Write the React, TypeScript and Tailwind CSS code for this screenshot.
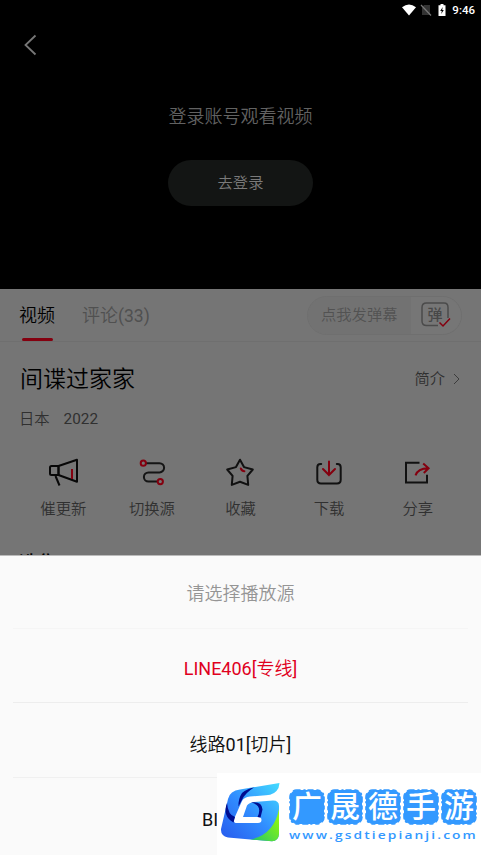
import type { ReactNode } from "react";

const actions: { label: string; icon: ReactNode }[] = [
  {
    label: "催更新",
    icon: (
      <svg width="32" height="30" viewBox="0 0 32 30" fill="none" stroke="#080808" strokeWidth="2" strokeLinejoin="round">
        <path d="M4.500 9h7v9h-7q-1.500 0-1.500-1.500v-6Q3 9 4.500 9z" />
        <path d="M11.500 9 30 2.700v22L11.500 18z" />
        <path d="M8.500 19l4 9.500" />
        <path d="M25 12v10" stroke="#84000f" />
      </svg>
    ),
  },
  {
    label: "切换源",
    icon: (
      <svg width="32" height="30" viewBox="0 0 32 30" fill="none" strokeWidth="2">
        <path d="M10 6.200h13.500a4.600 4.600 0 0 1 0 9.200h-11a4.600 4.600 0 0 0 0 9.200H24" stroke="#151515" />
        <circle cx="7.300" cy="6.200" r="2.600" fill="#757575" stroke="#84000f" />
        <circle cx="24.300" cy="24.600" r="2.600" fill="#757575" stroke="#84000f" />
      </svg>
    ),
  },
  {
    label: "收藏",
    icon: (
      <svg width="32" height="30" viewBox="0 0 32 30" fill="none" strokeWidth="2" strokeLinejoin="round" strokeLinecap="round">
        <path d="M16 2.700 20 10.100 28.800 12.500 23.400 18.900 24.200 27.900 16 24.700 7.800 27.900 8.600 18.900 3.200 12.500 12 10.100z" stroke="#111" />
        <path d="M16.800 11.500q1.200 2.600 3.600 2.700" stroke="#84000f" />
      </svg>
    ),
  },
  {
    label: "下载",
    icon: (
      <svg width="32" height="30" viewBox="0 0 32 30" fill="none" strokeWidth="2" strokeLinecap="round">
        <path d="M8.200 7H7.600Q4.300 7 4.300 10.300v12.400q0 3.700 3.700 3.700h16q3.700 0 3.700-3.700V10.300q0-3.300-3.300-3.300h-.6" stroke="#111" />
        <path d="M16 4.500V18M10 12l6 6 6-6" stroke="#84000f" />
      </svg>
    ),
  },
  {
    label: "分享",
    icon: (
      <svg width="32" height="30" viewBox="0 0 32 30" fill="none" strokeWidth="2">
        <path d="M17.500 5.800H4v19.600h21v-7.700" stroke="#111" />
        <path d="M13.500 18.300q2.500-6.800 12.500-7M21.200 6.400l5.400 4.800-4.800 4.800" stroke="#84000f" />
      </svg>
    ),
  },
];

const logoChars = ["广", "晟", "德", "手", "游"];

function StatusBar() {
  return (
    <div className="flex h-5 items-center justify-end pr-[6px] text-white">
      <svg width="14" height="12" viewBox="0 0 14 12" fill="#fff">
        <path d="M7 11.500 0 3.200Q7-2.400 14 3.200z" />
      </svg>
      <svg className="ml-[4px]" width="12" height="12" viewBox="0 0 12 12">
        <path d="M4 1h6v10H2V4z" fill="#333" />
        <path d="M1 1l10 10.500" stroke="#777" strokeWidth="1.200" />
      </svg>
      <svg className="ml-[6px]" width="8" height="12" viewBox="0 0 8 12">
        <path d="M2.500 0h3v1.200H7.500V12H.5V1.200h2z" fill="#fff" />
        <path d="M4.700 3 2.200 7h1.600l-.6 3 2.600-4H4.200z" fill="#000" />
      </svg>
      <span className="ml-[6px] text-[11.5px] leading-5 font-medium">9:46</span>
    </div>
  );
}

function Player() {
  return (
    <section className="h-[289px] bg-black">
      <StatusBar />
      <div className="flex h-[50px] items-center pl-6">
        <svg width="13" height="22" viewBox="0 0 13 22" fill="none" stroke="#777" strokeWidth="1.800">
          <path d="M11.500 1.500 1.500 11l10 9.500" />
        </svg>
      </div>
      <div className="flex flex-col items-center pt-[34px]">
        <p className="text-lg leading-[26px] text-[#626262]">登录账号观看视频</p>
        <button className="mt-[30px] h-[46px] w-[145px] rounded-full bg-[#131514] pt-px text-[15.3px] text-[#7a7a7a]">去登录</button>
      </div>
    </section>
  );
}

function DanmakuBar() {
  return (
    <div className="mr-[19px] flex h-[39px] w-[155px] overflow-hidden rounded-full border border-[#6f6f6f]">
      <div className="flex w-[103px] items-center bg-[#727272] pt-[2px] pl-[13px] text-[15.3px] whitespace-nowrap text-[#525252]">点我发弹幕</div>
      <div className="flex flex-1 items-center bg-[#767676] pl-[9px]">
        <svg width="32" height="28" viewBox="0 0 32 28" fill="none">
          <path d="M18 24.500H6.500Q2 24.500 2 20V6.500Q2 2 6.500 2H24Q28 2 28 6.500V17" stroke="#4b4b4b" strokeWidth="1.500" />
          <text x="15" y="18.500" textAnchor="middle" fontSize="15" fontWeight="500" fill="#484848">弹</text>
          <path d="M19.500 21.500 23 25l7-7.500" stroke="#84000f" strokeWidth="1.500" />
        </svg>
      </div>
    </div>
  );
}

function Details() {
  return (
    <section className="h-[566px] bg-[#757575]">
      <div className="flex h-[53px] items-center border-b border-[#6f6f6f] text-lg">
        <div className="relative ml-[19px] flex h-full items-center pt-[2px] text-black">
          视频
          <span className="absolute bottom-0 left-[3px] h-[3px] w-[31px] rounded-sm bg-[#84000f]" />
        </div>
        <span className="ml-[27px] flex-1 pt-[2px] text-[#505050]">
          评论<span className="text-[17.5px] font-normal">(33)</span>
        </span>
        <DanmakuBar />
      </div>
      <div className="flex h-[72px] items-center justify-between pl-[20px]">
        <h1 className="pt-[5px] text-[23px] text-black">间谍过家家</h1>
        <div className="mr-[21px] flex items-center pt-[2px] text-[15.3px] text-[#303030]">
          简介
          <svg className="ml-[8px]" width="7" height="12" viewBox="0 0 7 12" fill="none" stroke="#3c3c3c">
            <path d="M1 1l5 5-5 5" />
          </svg>
        </div>
      </div>
      <div className="-mt-[7px] flex h-6 items-center gap-[14px] pl-[19px] text-[15.3px] text-[#303030]">
        <span>日本</span>
        <span className="font-normal">2022</span>
      </div>
      <div className="mt-[26px] grid grid-cols-5 px-[19px]">
        {actions.map((action) => (
          <div key={action.label} className="flex flex-col items-center">
            {action.icon}
            <span className="mt-[10px] text-[15.3px] leading-6 text-[#303030]">{action.label}</span>
          </div>
        ))}
      </div>
      <h2 className="mt-[29px] pl-[19px] text-[19px] leading-7 font-medium text-black">选集</h2>
    </section>
  );
}

function SourceSheet() {
  return (
    <div className="absolute inset-x-0 bottom-0 h-[300px] border-t border-[#bbb] bg-[#fafafa] px-[13px] text-lg">
      <div className="flex h-[73px] items-center justify-center border-b border-[#f5f5f5] pt-[3px] text-[#959595]">请选择播放源</div>
      <div className="flex h-[74px] items-center justify-center border-b border-[#ededed] pt-[7px] text-[#e0001d]">
        <span className="font-normal">LINE406[</span>
        专线
        <span className="font-normal">]</span>
      </div>
      <div className="flex h-[75px] items-center justify-center border-b border-[#f0f0f0] pt-[9px] text-[#111]">
        线路
        <span className="font-normal">01[</span>
        切片
        <span className="font-normal">]</span>
      </div>
      <div className="flex h-[76px] items-center pt-[8px] pl-[189px] font-normal text-[#111]">BI</div>
    </div>
  );
}

function SiteMark() {
  return (
    <div className="absolute right-0 bottom-0 flex h-[82px] w-[264px] bg-white pl-[3px]">
      <svg className="mt-[9px] shrink-0" width="62" height="62" viewBox="0 0 62 62">
        <defs>
          <linearGradient id="body" x1="1" y1="0" x2="0" y2="1">
            <stop stopColor="#43dcff" />
            <stop offset=".5" stopColor="#318dff" />
            <stop offset="1" stopColor="#2758ec" />
          </linearGradient>
          <linearGradient id="leaf" x1="0" y1="1" x2="1" y2="0">
            <stop stopColor="#20c66b" />
            <stop offset="1" stopColor="#a2ff00" />
          </linearGradient>
        </defs>
        <path
          d="M59.500 1 58.500 6Q55 13 46 13.300L30 14.500Q24 15 22 19L14 37Q13 41 17 41H38Q41.500 41 41.500 38T38 35H23L27 23.500Q29 20.500 34 20L53 18.500Q59 18.500 59 24V52Q58.500 59 52 59.300L8 55.500Q.5 54 1 47L8 17Q10 8.500 20 7.500z"
          fill="url(#body)"
        />
        <path d="M59 27V52Q58.500 59 52 59.300L30 57.500Q54 53 59 27z" fill="url(#leaf)" />
        <path d="M34 5.500Q25 11 22 18L18.500 24.500Q18 17 22 11 27 6.500 34 5.500z" fill="#000d8f" />
        <path d="M7 21Q8 33 15 35L13.500 40.500Q2 34 7 21z" fill="#000d8f" />
        <path d="M31 20.500Q42 19 42.500 27.500L40.500 35.500 37.500 35Q43 23 31 20.500z" fill="#000d8f" />
      </svg>
      <div className="ml-[7px] pt-4">
        <div className="flex gap-[2px]">
          {logoChars.map((char) => (
            <div key={char} className="relative flex h-9 w-9 items-center justify-center text-[30px] leading-none font-medium text-white">
              <svg className="absolute inset-0" width="36" height="36" viewBox="0 0 36 36">
                <rect x="1" y="1" width="34" height="34" rx="7" fill="#3399ff" />
                <rect
                  x="1"
                  y="1"
                  width="34"
                  height="34"
                  rx="7"
                  fill="none"
                  stroke="#3399ff"
                  strokeWidth="1.600"
                  strokeLinecap="round"
                  strokeDasharray="3 4 1 3 5 4"
                />
              </svg>
              <span className="relative">{char}</span>
            </div>
          ))}
        </div>
        <p className="mt-[2px] w-[154px] origin-left scale-x-[1.2] font-['Open_Sans','Noto_Sans',sans-serif] text-[11.5px] leading-4 font-semibold tracking-[1.75px] whitespace-nowrap text-[#3399ff]">
          www.gsdtiepianji.com
        </p>
      </div>
    </div>
  );
}

export default function App() {
  return (
    <main className="relative h-[855px] w-[481px] overflow-hidden bg-black font-[Roboto,'Noto_Sans_CJK_SC',sans-serif] font-[350]">
      <Player />
      <Details />
      <SourceSheet />
      <SiteMark />
    </main>
  );
}
